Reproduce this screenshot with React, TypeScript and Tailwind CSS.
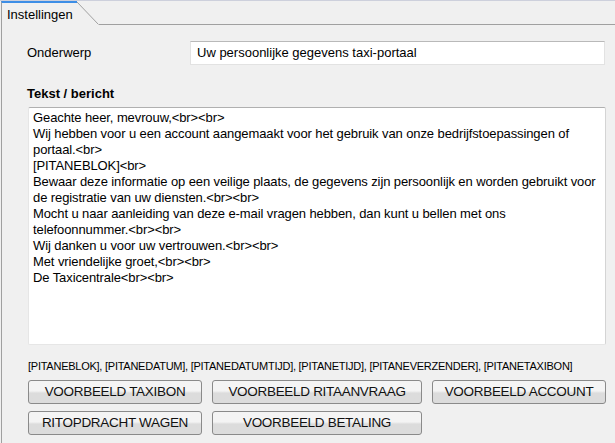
const lines = [
  "Geachte heer, mevrouw,<br><br>",
  "Wij hebben voor u een account aangemaakt voor het gebruik van onze bedrijfstoepassingen of portaal.<br>",
  "[PITANEBLOK]<br>",
  "Bewaar deze informatie op een veilige plaats, de gegevens zijn persoonlijk en worden gebruikt voor de registratie van uw diensten.<br><br>",
  "Mocht u naar aanleiding van deze e-mail vragen hebben, dan kunt u bellen met ons telefoonnummer.<br><br>",
  "Wij danken u voor uw vertrouwen.<br><br>",
  "Met vriendelijke groet,<br><br>",
  "De Taxicentrale<br><br>",
];

function Button({ label, wide }: { label: string; wide?: boolean }) {
  return (
    <button
      className={`${wide ? "w-[210px]" : "w-[174px]"} h-[24px] rounded-[3px] border border-[#8a8a8a] bg-gradient-to-b from-[#f4f4f4] from-45% to-[#dcdcdc] to-55% text-[13.5px] leading-[20px] tracking-[-0.3px] text-[#111]`}
    >
      {label}
    </button>
  );
}

export default function App() {
  return (
    <div className="w-[615px] h-[443px] overflow-hidden border-t border-[#cdd0dc] bg-[#f0f0f0] font-['Liberation_Sans',Arial,sans-serif] text-black">
      {/* Tab strip */}
      <div className="flex h-[24px]">
        <div className="ml-px w-[76px] border-l border-t-2 border-l-[#a0a0a0] border-t-[#3d8ee6] pl-[5px] pt-[2px] text-[13px] leading-[19px]">
          Instellingen
        </div>
        <svg width="22" height="24" className="block shrink-0">
          <line x1="0" y1="1" x2="21.5" y2="23.5" stroke="#a0a0a0" strokeWidth="1" />
        </svg>
        <div className="flex-1 border-b border-[#a0a0a0]" />
      </div>

      {/* Panel */}
      <div className="ml-px h-[418px] border-l border-[#a0a0a0] pl-[25px] pr-[9px] pt-[16px]">
        <div className="flex h-[24px] items-center">
          <span className="w-[163px] text-[13px]">Onderwerp</span>
          <div className="h-[24px] w-[415px] border border-[#e2e2e2] border-t-[#b9b9b9] bg-white pl-[6px] text-[13px] leading-[22px]">
            Uw persoonlijke gegevens taxi-portaal
          </div>
        </div>

        <div className="mt-[21px] text-[13px] font-bold leading-[16px]">Tekst / bericht</div>

        <div className="ml-px mt-[5px] h-[238px] w-[578px] rounded-[2px] border border-[#e6e6e6] border-t-[#b0b0b0] border-r-[#d4d4d4] bg-white pl-[4px] pr-[2px] pt-[2px] text-[13px] leading-[16px] tracking-[-0.1px]">
          {lines.map((l) => (
            <div key={l}>{l}</div>
          ))}
        </div>

        <div className="ml-px mt-[15px] text-[11px] leading-[12px] tracking-[-0.25px]">
          [PITANEBLOK], [PITANEDATUM], [PITANEDATUMTIJD], [PITANETIJD], [PITANEVERZENDER], [PITANETAXIBON]
        </div>

        <div className="ml-px mt-[8px] flex gap-[10px]">
          <Button label="VOORBEELD TAXIBON" />
          <Button label="VOORBEELD RITAANVRAAG" wide />
          <Button label="VOORBEELD ACCOUNT" />
        </div>
        <div className="ml-px mt-[7px] flex gap-[10px]">
          <Button label="RITOPDRACHT WAGEN" />
          <Button label="VOORBEELD BETALING" wide />
        </div>
      </div>
    </div>
  );
}
